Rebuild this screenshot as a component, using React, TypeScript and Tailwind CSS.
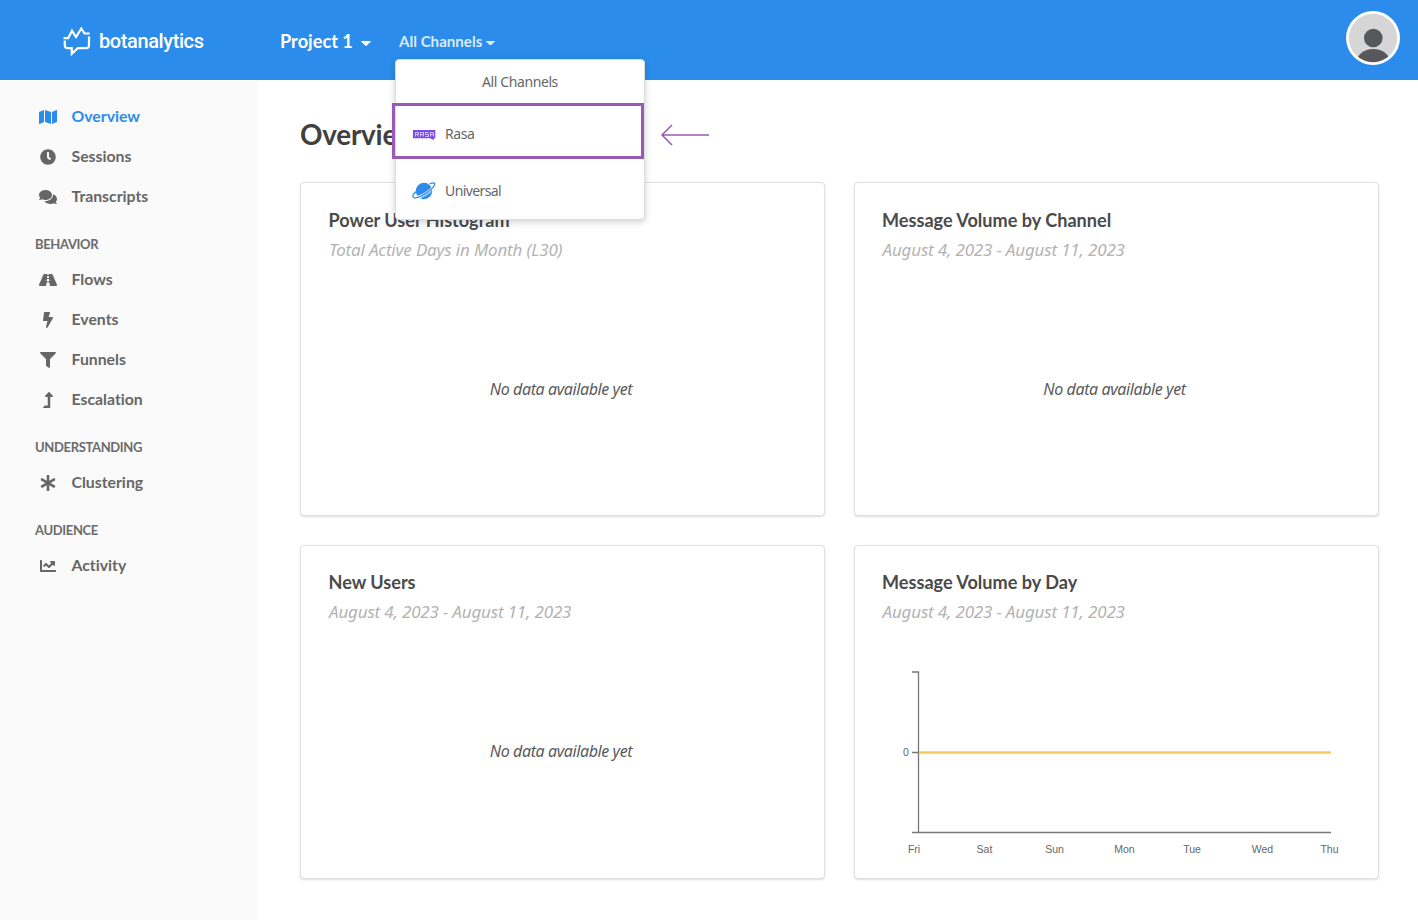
import type { ReactNode } from "react";
import type { IconType } from "react-icons";
import {
  FaMap,
  FaClock,
  FaComments,
  FaRoad,
  FaBolt,
  FaFilter,
  FaLevelUpAlt,
  FaAsterisk,
  FaChartLine,
} from "react-icons/fa";

type NavItem = { label: string; icon: IconType; size?: number; active?: boolean };
type NavGroup = { heading?: string; items: NavItem[] };

const groups: NavGroup[] = [
  {
    items: [
      { label: "Overview", icon: FaMap, size: 18, active: true },
      { label: "Sessions", icon: FaClock },
      { label: "Transcripts", icon: FaComments, size: 18 },
    ],
  },
  {
    heading: "BEHAVIOR",
    items: [
      { label: "Flows", icon: FaRoad, size: 18 },
      { label: "Events", icon: FaBolt },
      { label: "Funnels", icon: FaFilter },
      { label: "Escalation", icon: FaLevelUpAlt },
    ],
  },
  { heading: "UNDERSTANDING", items: [{ label: "Clustering", icon: FaAsterisk }] },
  { heading: "AUDIENCE", items: [{ label: "Activity", icon: FaChartLine }] },
];

function Caret({ className }: { className: string }) {
  return (
    <svg viewBox="0 0 10 5" className={className} fill="currentColor">
      <path d="M.6 0h8.800c.5 0 .7.5.4.800L5.500 4.800a.7.7 0 0 1-1 0L.2.800C-.1.500.1 0 .6 0z" />
    </svg>
  );
}

function Logo() {
  return (
    <div className="flex items-center text-white">
      <svg width="28" height="30" viewBox="0 0 28 30" fill="none" stroke="currentColor" strokeWidth="2.200">
        <path d="M.5 12.200h4.700L9 4.800l4 6.200L18.300 2.500l3.200 5h5.200" />
        <path d="M1.800 14.500v4.700a3 3 0 0 0 3 3h4v5.600l6-5.600h8.200a3 3 0 0 0 3-3V10.500" />
      </svg>
      <span className="ml-[8px] font-[Roboto,sans-serif] text-[20px] leading-6 font-medium tracking-[-0.4px]">
        botanalytics
      </span>
    </div>
  );
}

function Avatar() {
  return (
    <svg width="54" height="54" viewBox="0 0 54 54">
      <defs>
        <clipPath id="avatar-clip">
          <circle cx="27" cy="27" r="24.200" />
        </clipPath>
      </defs>
      <circle cx="27" cy="27" r="27" fill="#fff" />
      <circle cx="27" cy="27" r="24.200" fill="#d6d6d6" />
      <g clipPath="url(#avatar-clip)" fill="#57585c">
        <circle cx="27.300" cy="27" r="9.300" />
        <ellipse cx="27.300" cy="52" rx="17" ry="14" />
      </g>
    </svg>
  );
}

function RasaIcon() {
  return (
    <svg width="24" height="12" viewBox="0 0 24 12" className="mt-[2px]">
      <path d="M1 1h22.300v8.200h-1.300V11l-4-1.800H1z" fill="#7c4bf0" />
      <g fill="none" stroke="#dccffb" strokeWidth=".9">
        <path d="M3.500 7.500v-4h3v2h-3M5 5.500l1.500 2M8.500 7.500v-4h3v4M8.500 5.700h3M16.500 3.500h-3v2h3v2h-3M18.500 7.500v-4h3v4M18.500 5.700h3" />
      </g>
    </svg>
  );
}

function PlanetIcon() {
  return (
    <svg width="24" height="18" viewBox="0 0 24 18" className="mt-[2px]">
      <circle cx="12" cy="9" r="8.200" fill="#2b8ceb" />
      <path d="M2.800 15.200C8 15.200 18.500 9.500 21.800 3.500" fill="none" stroke="#fff" strokeWidth="2" />
      <path
        d="M4.600 9.200C1.500 11.600.2 14 1.200 15.200c1.800 2.100 8.200-.6 13.500-4.400 5.200-3.700 9-7.800 7.900-9.300-.7-.9-2.600-.6-5 .3"
        fill="none"
        stroke="#2b8ceb"
        strokeWidth="1.300"
      />
      <path d="M7 15.900c4.500-.8 9-3.500 12.500-6.900" fill="none" stroke="#fff" strokeWidth=".8" />
    </svg>
  );
}

function Header() {
  return (
    <header className="flex h-20 shrink-0 items-start bg-[#2b8ceb] text-white">
      <div className="w-[258px] pt-[26px] pl-[63px]">
        <Logo />
      </div>
      <div className="flex h-[83px] w-[113px] items-center pl-[22px] text-[18.200px] font-bold">
        Project 1
        <Caret className="mt-[3px] ml-[8px] h-[5px] w-[10px]" />
      </div>
      <div className="relative ml-[28px] flex h-[82px] items-center text-[15.100px] font-bold text-[#d9eafd]">
        All Channels
        <Caret className="mt-[4px] ml-[4px] h-[4.500px] w-[9px]" />
        <ChannelMenu />
      </div>
      <div className="mt-[11px] mr-[18px] ml-auto">
        <Avatar />
      </div>
    </header>
  );
}

function ChannelMenu() {
  return (
    <div className="absolute top-[59px] -left-[4px] z-10 h-[161px] w-[250px] rounded-[4px] border border-[#dcdcdd] bg-white font-['Noto_Sans',sans-serif] text-[14px] font-normal tracking-[-0.4px] text-[#666] shadow-[0_2px_6px_rgba(34,36,38,0.22)]">
      <div className="flex h-[43px] items-center justify-center">All Channels</div>
      <div className="-ml-1 flex h-[56px] w-[252px] items-center border-[3px] border-[#9b59b6] pt-[5px] pl-[17px]">
        <RasaIcon />
        <span className="ml-[9px]">Rasa</span>
      </div>
      <div className="flex h-[62px] items-center pl-4">
        <PlanetIcon />
        <span className="ml-[9px] tracking-[-0.600px]">Universal</span>
      </div>
      <svg
        className="absolute top-[64px] left-[264px]"
        width="50"
        height="22"
        viewBox="0 0 50 22"
        fill="none"
        stroke="#9b59b6"
        strokeWidth="1.500"
      >
        <path d="M49 11H2M12 1 2 11l10 10" />
      </svg>
    </div>
  );
}

function Sidebar() {
  return (
    <nav className="w-[258px] shrink-0 bg-[#fafafa] pt-[17px] [font-variant-ligatures:none]">
      {groups.map((group) => (
        <div key={group.items[0].label}>
          {group.heading && (
            <div className="h-[43px] pt-[17px] pl-[35px] text-[13px] leading-5 font-bold tracking-[-0.350px] text-[#6b6b6b]">
              {group.heading}
            </div>
          )}
          {group.items.map(({ label, icon: Icon, size = 16, active }) => (
            <a
              key={label}
              className={`flex h-10 items-center text-[15.800px] font-bold ${active ? "text-[#2b8ceb]" : "text-[#666]"}`}
            >
              <span className="-mt-px ml-[34.500px] flex w-[27px] justify-center">
                <Icon size={size} />
              </span>
              <span className="-mt-[2px] ml-[10px] leading-6">{label}</span>
            </a>
          ))}
        </div>
      ))}
    </nav>
  );
}

function Card({ title, subtitle, children }: { title: string; subtitle: string; children: ReactNode }) {
  return (
    <section className="flex flex-col rounded-[4px] border border-[#e0e0e0] bg-white shadow-[0_1px_2px_rgba(34,36,38,0.15)]">
      <h2 className="mt-[24.800px] ml-[27.500px] text-[18.100px] leading-6 font-bold text-[#4a4a4a]">{title}</h2>
      <p className="mt-[6px] ml-7 font-['Noto_Sans',sans-serif] text-[17px] leading-6 tracking-[-0.170px] text-[#b3b3b3] italic">
        {subtitle}
      </p>
      {children}
    </section>
  );
}

function NoData() {
  return (
    <div className="mt-[115px] pr-[3px] text-center font-['Noto_Sans',sans-serif] text-[16px] leading-6 tracking-[-0.400px] text-[#5a5a5a] italic">
      No data available yet
    </div>
  );
}

const days: [string, number][] = [
  ["Fri", 59],
  ["Sat", 129.500],
  ["Sun", 199.500],
  ["Mon", 269.500],
  ["Tue", 337],
  ["Wed", 407.500],
  ["Thu", 474.500],
];

function VolumeChart() {
  return (
    <svg width="523" height="230" viewBox="0 0 523 230" className="mt-[20.600px] font-['Liberation_Sans',sans-serif]">
      <path d="M57 27h6.500v160.500H57M57 107.500h6.500M63.500 187.500H476" fill="none" stroke="#777" strokeWidth="1.300" />
      <path d="M64 107.500h412" stroke="#f5cc57" strokeWidth="2.400" />
      <text x="51" y="111" fontSize="10.500" textAnchor="middle" fill="#666">
        0
      </text>
      {days.map(([day, x]) => (
        <text key={day} x={x} y="208" fontSize="10.500" textAnchor="middle" fill="#666">
          {day}
        </text>
      ))}
    </svg>
  );
}

export default function App() {
  return (
    <div className="h-[922px] w-[1418px] overflow-hidden bg-white font-[Lato,sans-serif]">
      <div className="flex h-[920px] flex-col">
        <Header />
        <div className="flex flex-1">
          <Sidebar />
          <main className="flex-1 pl-[42px]">
            <h1 className="mt-[37px] text-[27.800px] leading-9 font-bold tracking-[-0.200px] text-[#404040]">Overview</h1>
            <div className="mt-[29px] grid w-[1079px] grid-cols-[525px_525px] grid-rows-[334px_334px] gap-x-[28.500px] gap-y-[28.600px]">
              <Card title="Power User Histogram" subtitle="Total Active Days in Month (L30)">
                <NoData />
              </Card>
              <Card title="Message Volume by Channel" subtitle="August 4, 2023 - August 11, 2023">
                <NoData />
              </Card>
              <Card title="New Users" subtitle="August 4, 2023 - August 11, 2023">
                <NoData />
              </Card>
              <Card title="Message Volume by Day" subtitle="August 4, 2023 - August 11, 2023">
                <VolumeChart />
              </Card>
            </div>
          </main>
        </div>
      </div>
    </div>
  );
}
